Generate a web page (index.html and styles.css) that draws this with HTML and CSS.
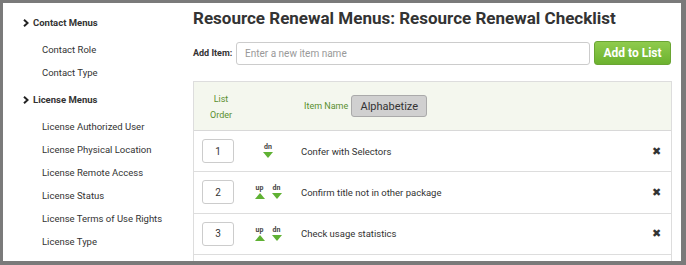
FILE: index.html
```html
<html>
  <head>
    <title>Resource Renewal Checklist</title>
    <link rel="stylesheet" href="styles.css">
  </head>
  <body>
    <div class="frame">
      <div class="sidebar">
        <div class="menu-group">
          <div class="menu-heading"><svg class="chev" width="6" height="8" viewBox="0 0 6 8"><path d="M1 0.8 L4.6 4 L1 7.2" fill="none" stroke="#222" stroke-width="2"/></svg>Contact Menus</div>
          <div class="menu-item">Contact Role</div>
          <div class="menu-item">Contact Type</div>
        </div>
        <div class="menu-group">
          <div class="menu-heading"><svg class="chev" width="6" height="8" viewBox="0 0 6 8"><path d="M1 0.8 L4.6 4 L1 7.2" fill="none" stroke="#222" stroke-width="2"/></svg>License Menus</div>
          <div class="menu-item">License Authorized User</div>
          <div class="menu-item">License Physical Location</div>
          <div class="menu-item">License Remote Access</div>
          <div class="menu-item">License Status</div>
          <div class="menu-item">License Terms of Use Rights</div>
          <div class="menu-item">License Type</div>
        </div>
      </div>

      <div class="main">
        <h1>Resource Renewal Menus: Resource Renewal Checklist</h1>

        <div class="add-row">
          <label for="newItem">Add Item:</label>
          <input id="newItem" type="text" placeholder="Enter a new item name">
          <button class="btn-add">Add to List</button>
        </div>

        <div class="list-table">
          <div class="list-head">
            <div class="col-order">List<br>Order</div>
            <div class="col-arrows"></div>
            <div class="col-name">Item Name <button class="btn-alpha">Alphabetize</button></div>
          </div>

          <div class="list-row">
            <div class="col-order"><input class="order-box" value="1"></div>
            <div class="col-arrows">
              <span class="arrow"><span class="lbl">dn</span><span class="tri-dn"></span></span>
            </div>
            <div class="col-name">Confer with Selectors</div>
            <div class="col-del">&#10006;</div>
          </div>

          <div class="list-row">
            <div class="col-order"><input class="order-box" value="2"></div>
            <div class="col-arrows">
              <span class="arrow"><span class="lbl">up</span><span class="tri-up"></span></span>
              <span class="arrow"><span class="lbl">dn</span><span class="tri-dn"></span></span>
            </div>
            <div class="col-name">Confirm title not in other package</div>
            <div class="col-del">&#10006;</div>
          </div>

          <div class="list-row">
            <div class="col-order"><input class="order-box" value="3"></div>
            <div class="col-arrows">
              <span class="arrow"><span class="lbl">up</span><span class="tri-up"></span></span>
              <span class="arrow"><span class="lbl">dn</span><span class="tri-dn"></span></span>
            </div>
            <div class="col-name">Check usage statistics</div>
            <div class="col-del">&#10006;</div>
          </div>

          <div class="list-row"></div>
        </div>
      </div>
    </div>
  </body>
</html>
```

FILE: styles.css
```css
body {
    margin: 0;
    background-color: #7a7a7a;
    font-family: Roboto, "Liberation Sans", Arial, sans-serif;
    color: #333;
}

.frame {
    margin: 3px 5px 0 3px;
    height: 258px;
    background-color: #fff;
    display: flex;
    overflow: hidden;
}

/* left menu */
.sidebar {
    width: 190px;
    padding-top: 8px;
    font-size: 9.5px;
}

.menu-group {
    margin-bottom: 4.5px;
}

.menu-heading {
    height: 23px;
    font-weight: bold;
    padding-left: 20px;
    margin-bottom: 3.5px;
    display: flex;
    align-items: center;
}

.chev {
    margin-right: 4px;
}

.menu-item {
    line-height: 23px;
    padding-left: 39px;
}

/* main area */
.main {
    flex: 1;
    padding-right: 9px;
}

h1 {
    font-size: 17px;
    margin: 3px 0 0 0;
    line-height: 24px;
    color: #333;
}

.add-row {
    display: flex;
    align-items: center;
    margin-top: 11px;
    height: 24px;
}

.add-row label {
    font-size: 9px;
    font-weight: bold;
    width: 43px;
}

.add-row input {
    width: 354px;
    height: 23px;
    box-sizing: border-box;
    border: 1px solid #ccc;
    border-radius: 3px;
    padding: 0 8px;
    font-family: inherit;
    font-size: 10px;
    color: #333;
}

.add-row input::placeholder {
    color: #999;
}

.btn-add {
    margin-left: 4px;
    width: 77px;
    height: 24px;
    border: 1px solid #6aa533;
    border-radius: 3px;
    background: linear-gradient(#8fcb4d, #6cb22f);
    color: #fff;
    font-family: inherit;
    font-size: 12px;
    font-weight: bold;
    padding: 0;
}

/* list table */
.list-table {
    margin-top: 16px;
    border: 1px solid #ddd;
    border-bottom: none;
}

.list-head {
    display: flex;
    align-items: center;
    height: 48px;
    background-color: #f4f7ee;
    border-bottom: 1px solid #d8d8d8;
    color: #5a8f2e;
    font-size: 9px;
}

.list-head .col-order {
    line-height: 16px;
    text-align: center;
    padding-top: 2px;
    padding-left: 0;
}

.list-head .col-name {
    padding-left: 16px;
    display: flex;
    align-items: center;
}

.btn-alpha {
    margin-left: 3px;
    width: 76px;
    height: 22px;
    border: 1px solid #aaa;
    border-radius: 3px;
    background: #d0d0d0;
    color: #333;
    font-family: inherit;
    font-size: 11px;
    padding: 0;
}

.list-row {
    display: flex;
    align-items: center;
    height: 40.33px;
    border-bottom: 1px solid #ddd;
    font-size: 9.5px;
}

.col-order {
    width: 54px;
    padding-left: 8px;
    box-sizing: border-box;
}

.order-box {
    width: 32px;
    height: 24px;
    box-sizing: border-box;
    border: 1px solid #ccc;
    border-radius: 3px;
    text-align: center;
    font-family: inherit;
    font-size: 10px;
    color: #333;
}

.col-arrows {
    width: 40px;
    display: flex;
    justify-content: center;
    gap: 6px;
}

.arrow {
    width: 11px;
    display: flex;
    flex-direction: column;
    align-items: center;
}

.lbl {
    font-size: 7px;
    font-weight: bold;
    line-height: 7px;
    color: #444;
}

.tri-up {
    width: 0;
    height: 0;
    margin-top: 1px;
    border-left: 5px solid transparent;
    border-right: 5px solid transparent;
    border-bottom: 6px solid #5fb133;
}

.tri-dn {
    width: 0;
    height: 0;
    margin-top: 1px;
    border-left: 5px solid transparent;
    border-right: 5px solid transparent;
    border-top: 6px solid #5fb133;
}

.col-name {
    flex: 1;
    padding-left: 13px;
}

.col-del {
    width: 30px;
    font-size: 11px;
    color: #333;
    text-align: center;
}
```
